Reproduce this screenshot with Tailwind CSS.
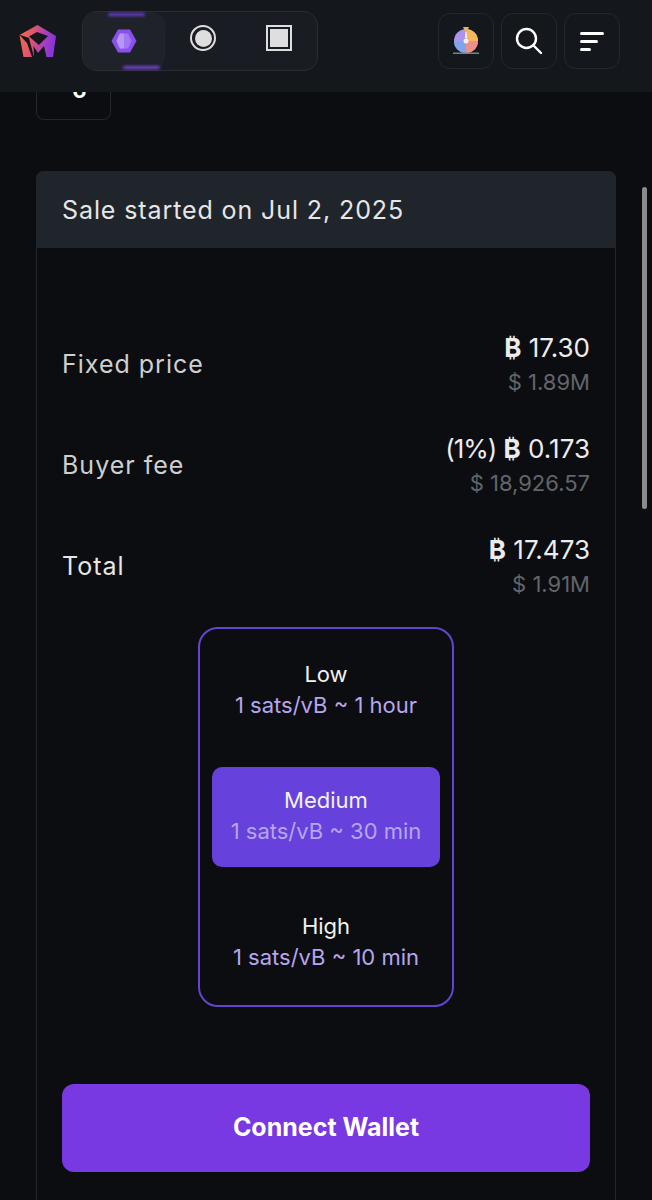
<!DOCTYPE html>
<html lang="en">
<head>
    <meta charset="UTF-8">
    <meta name="viewport" content="width=device-width, initial-scale=1.0">
    <title>Sale</title>
    <script src="https://cdn.jsdelivr.net/npm/@tailwindcss/browser@4"></script>
</head>
<body class="relative h-[1200px] overflow-hidden bg-[#0c0d10] font-['Inter','DejaVu_Sans',sans-serif] text-white">
    <!-- Top bar -->
    <header class="flex h-[92px] items-start bg-[#14181d]">
        <svg class="ml-[19px] mt-[24px] h-[34px] w-[38px]" viewBox="0 0 38 34">
            <defs>
                <linearGradient id="logoGrad" x1="0" y1="0" x2="1" y2="0.2">
                    <stop offset="0" stop-color="#f2704a"/>
                    <stop offset="0.4" stop-color="#e0566a"/>
                    <stop offset="0.75" stop-color="#a83fc0"/>
                    <stop offset="1" stop-color="#8a35d6"/>
                </linearGradient>
            </defs>
            <path d="M18.5 1 37 12 34 33H27.5L25 22 19 29 14.5 22 15 33H4.5L0.5 11Z" fill="url(#logoGrad)"/>
            <path d="M10 12.5 18 8 29 12 20 21Z" fill="#14181d"/>
            <path d="M0 10.5 10 14 15 33H13L8 19Z" fill="#14181d"/>
        </svg>

        <!-- Tabs -->
        <nav class="relative ml-[25px] mt-[11px] flex h-[60px] w-[236px] rounded-[14px] border border-[#2a2d33] bg-[#191c22]">
            <div class="relative flex w-[82px] items-center justify-center rounded-[13px] bg-[#1f2229]">
                <span class="absolute left-[25px] top-[1px] h-[3px] w-[37px] rounded-full bg-[#6d3bd1] blur-[1.5px]"></span>
                <span class="absolute bottom-[1px] left-[40px] h-[3px] w-[37px] rounded-full bg-[#7a45de] blur-[1.5px]"></span>
                <svg class="h-[26px] w-[26px]" viewBox="0 0 26 26">
                    <path d="M7 1.5H19L25.5 13 19 24.5H7L0.5 13Z" fill="#8a50ee"/>
                    <path d="M9 5.5H17L20.5 13 17 20.5H9L5.5 13Z" fill="#a277f2"/>
                    <path d="M9 5.5H13V20.5H9L5.5 13Z" fill="#b797f6"/>
                </svg>
            </div>
            <div class="flex w-[76px] justify-center pt-[13px]">
                <div class="flex h-[26px] w-[26px] items-center justify-center rounded-full border-2 border-[#dedede]">
                    <div class="h-[17px] w-[17px] rounded-full bg-[#dedede]"></div>
                </div>
            </div>
            <div class="flex w-[76px] justify-center pt-[13px]">
                <div class="flex h-[26px] w-[26px] items-center justify-center border-2 border-[#dedede]">
                    <div class="h-[18px] w-[18px] bg-[#dedede]"></div>
                </div>
            </div>
        </nav>

        <!-- Actions -->
        <div class="ml-auto mr-[32px] mt-[13px] flex gap-[7px]">
            <button class="flex h-[56px] w-[56px] items-center justify-center rounded-[12px] border border-[#24272c]">
                <svg class="h-[28px] w-[28px]" viewBox="0 0 28 28">
                    <circle cx="14" cy="14" r="12" fill="#ab94ee"/>
                    <path d="M14 14V2A12 12 0 0 1 26 14Z" fill="#f5b65e"/>
                    <path d="M14 14H26A12 12 0 0 1 14 26Z" fill="#ee8f8c"/>
                    <path d="M14 14V26A12 12 0 0 1 2 14Z" fill="#7ca6ee"/>
                    <path d="M13.4 5H14.6L15 11H13Z" fill="#f3eff7"/>
                    <circle cx="14" cy="14" r="2.5" fill="#f3eff7"/>
                    <path d="M11 0H17L14 6Z" fill="#e9b44c"/>
                    <rect x="1" y="25.5" width="26" height="1.5" fill="#7c8088"/>
                </svg>
            </button>
            <button class="flex h-[56px] w-[56px] items-center justify-center rounded-[12px] border border-[#24272c]">
                <svg class="h-[28px] w-[28px]" viewBox="0 0 28 28" fill="none" stroke="#fff" stroke-width="2.4" stroke-linecap="round">
                    <circle cx="11.5" cy="11.5" r="9.5"/>
                    <path d="M18.5 18.5 26 26"/>
                </svg>
            </button>
            <button class="flex h-[56px] w-[56px] flex-col items-start justify-center gap-[5px] rounded-[12px] border border-[#24272c] pl-[15px]">
                <span class="h-[3px] w-[24px] rounded-full bg-white"></span>
                <span class="h-[3px] w-[18px] rounded-full bg-white"></span>
                <span class="h-[3px] w-[11px] rounded-full bg-white"></span>
            </button>
        </div>
    </header>

    <!-- Quantity box, scrolled under the bar -->
    <div class="ml-[36px] flex h-[28px] w-[75px] items-start justify-center overflow-hidden rounded-b-[8px] border border-t-0 border-[#24272c]">
        <span class="-mt-[14px] ml-[12px] text-[22px] font-bold leading-[24px]">6</span>
    </div>

    <!-- Sale card -->
    <section class="ml-[36px] mt-[51px] h-[1100px] w-[580px] rounded-t-[8px] border border-t-0 border-[#23262b]">
        <h2 class="-mx-px flex h-[77px] items-center rounded-t-[8px] bg-[#20242b] pl-[26px] pt-[2px] text-[25px] tracking-[0.9px] text-[#e6e6e6]">Sale started on Jul 2, 2025</h2>

        <div class="mt-[83px] flex flex-col gap-[33px] pl-[25px] pr-[25px]">
            <div class="flex h-[68px] items-center justify-between">
                <span class="text-[25px] tracking-[1px] text-[#cfcfcf]">Fixed price</span>
                <div class="text-right">
                    <div class="text-[26px] leading-[34px] text-[#ececec]"><b class="font-bold">₿</b> 17.30</div>
                    <div class="text-[22px] leading-[34px] text-[#62656a]">$ 1.89M</div>
                </div>
            </div>
            <div class="flex h-[68px] items-center justify-between">
                <span class="text-[25px] tracking-[1px] text-[#cfcfcf]">Buyer fee</span>
                <div class="text-right">
                    <div class="text-[26px] leading-[34px] text-[#ececec]"><span class="tracking-[-1px]">(1%)</span> <b class="font-bold">₿</b> 0.173</div>
                    <div class="text-[22px] leading-[34px] text-[#62656a]">$ 18,926.57</div>
                </div>
            </div>
            <div class="flex h-[68px] items-center justify-between">
                <span class="text-[25px] tracking-[1px] text-[#e6e6e6]">Total</span>
                <div class="text-right">
                    <div class="text-[26px] leading-[34px] text-[#ececec]"><b class="font-bold">₿</b> 17.473</div>
                    <div class="text-[22px] leading-[34px] text-[#62656a]">$ 1.91M</div>
                </div>
            </div>
        </div>

        <!-- Fee options -->
        <div class="ml-[161px] mt-[26px] flex w-[256px] flex-col gap-[26px] rounded-[20px] border-2 border-[#6345d0] p-[12px]">
            <div class="flex h-[100px] flex-col items-center justify-center rounded-[10px] pb-[2px]">
                <span class="text-[22px] leading-[31px] text-[#f2f2f2]">Low</span>
                <span class="text-[22px] leading-[31px] text-[#b5a6ee]">1 sats/vB ~ 1 hour</span>
            </div>
            <div class="flex h-[100px] flex-col items-center justify-center rounded-[10px] bg-[#6741dc] pb-[2px]">
                <span class="text-[22px] leading-[31px] text-[#f2f2f2]">Medium</span>
                <span class="text-[22px] leading-[31px] text-[#b5a6ee]">1 sats/vB ~ 30 min</span>
            </div>
            <div class="flex h-[100px] flex-col items-center justify-center rounded-[10px] pb-[2px]">
                <span class="text-[22px] leading-[31px] text-[#f2f2f2]">High</span>
                <span class="text-[22px] leading-[31px] text-[#b5a6ee]">1 sats/vB ~ 10 min</span>
            </div>
        </div>

        <button class="ml-[25px] mt-[77px] h-[88px] w-[528px] rounded-[12px] bg-[#7839e3] text-[25px] font-bold text-white">Connect Wallet</button>
    </section>

    <!-- Scrollbar -->
    <div class="absolute left-[642px] top-[187px] h-[322px] w-[5px] rounded-full bg-[#8b8b8e]"></div>
</body>
</html>
